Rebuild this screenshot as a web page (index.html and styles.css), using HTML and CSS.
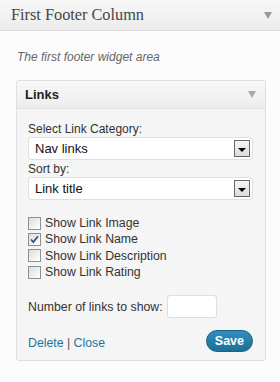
FILE: index.html
```html
<!DOCTYPE html>
<html lang="en">
<head>
  <meta charset="UTF-8">
  <title>Widgets</title>
  <link rel="stylesheet" href="styles.css">
</head>
<body>

  <div class="sidebar">
    <div class="sidebar-head">
      <h3>First Footer Column</h3>
      <span class="arrow"></span>
    </div>

    <div class="sidebar-body">
      <p class="desc">The first footer widget area</p>

      <div class="widget">
        <div class="widget-head">
          <h4>Links</h4>
          <span class="arrow small"></span>
        </div>

        <div class="widget-inside">
          <label class="field-label">Select Link Category:</label>
          <div class="select">
            <span>Nav links</span>
            <span class="select-btn"></span>
          </div>

          <label class="field-label">Sort by:</label>
          <div class="select">
            <span>Link title</span>
            <span class="select-btn"></span>
          </div>

          <ul class="checks">
            <li><span class="box"></span>Show Link Image</li>
            <li>
              <span class="box">
                <svg width="9" height="9" viewBox="0 0 9 9"><path d="M1 4.5 L3.3 7 L8 1.2" fill="none" stroke="#3b4f8c" stroke-width="1.8"/></svg>
              </span>Show Link Name
            </li>
            <li><span class="box"></span>Show Link Description</li>
            <li><span class="box"></span>Show Link Rating</li>
          </ul>

          <div class="number-row">
            <label>Number of links to show:</label>
            <span class="num-input"></span>
          </div>

          <div class="actions">
            <div class="links"><a href="#">Delete</a> <span class="sep">|</span> <a href="#">Close</a></div>
            <button class="save">Save</button>
          </div>
        </div>
      </div>
    </div>
  </div>

</body>
</html>
```

FILE: styles.css
```css
body {
  margin: 0;
  background-color: #fcfcfc;
  font-family: "Liberation Sans", Arial, sans-serif;
  font-size: 12px;
  color: #333;
}

.sidebar-head {
  height: 30px;
  display: flex;
  align-items: center;
  justify-content: space-between;
  padding: 0 8px 0 11px;
  background: linear-gradient(#f7f7f7, #ececec);
  border-bottom: 1px solid #dcdcdc;
}

.sidebar-head h3 {
  margin: 0;
  font-family: "Liberation Serif", "Times New Roman", serif;
  font-weight: normal;
  font-size: 16.3px;
  color: #464646;
}

.arrow {
  width: 0;
  height: 0;
  border-left: 4px solid transparent;
  border-right: 4px solid transparent;
  border-top: 7px solid #999;
}

.arrow.small {
  border-top-color: #aaa;
}

.sidebar-body {
  padding: 0 14px 0 16px;
}

.desc {
  margin: 0;
  padding: 19px 0 15px 1px;
  line-height: 15px;
  font-style: italic;
  color: #666;
}

.widget {
  border: 1px solid #dfdfdf;
  border-radius: 3px;
  background-color: #f5f5f5;
}

.widget-head {
  height: 27px;
  display: flex;
  align-items: center;
  justify-content: space-between;
  padding: 0 9px 0 8px;
  background: linear-gradient(#f8f8f8, #ededed);
  border-bottom: 1px solid #dfdfdf;
  border-radius: 3px 3px 0 0;
}

.widget-head h4 {
  margin: 0;
  font-size: 13px;
  color: #222;
}

.widget-inside {
  padding: 13px 12px 8px 11px;
}

.field-label {
  display: block;
  line-height: 15px;
}

.select {
  height: 21px;
  margin-bottom: 2px;
  display: flex;
  align-items: center;
  justify-content: space-between;
  padding: 0 2px 0 6px;
  background-color: #fff;
  border: 1px solid #dfdfdf;
  border-radius: 3px;
  font-size: 13px;
  color: #111;
}

.select-btn {
  width: 14px;
  height: 15px;
  border: 1px solid #666;
  background: linear-gradient(#f4f4f4, #dcdcdc);
  display: flex;
  align-items: center;
  justify-content: center;
}

.select-btn::after {
  content: "";
  border-left: 4px solid transparent;
  border-right: 4px solid transparent;
  border-top: 4px solid #000;
  margin-top: 2px;
}

.checks {
  list-style: none;
  margin: 15px 0 0;
  padding: 0;
}

.checks li {
  display: flex;
  align-items: center;
  height: 16.3px;
  font-size: 12.3px;
}

.box {
  width: 11px;
  height: 11px;
  margin-right: 4px;
  border: 1px solid #8e8f8f;
  background: linear-gradient(135deg, #dcdcdc, #fff);
  display: flex;
  align-items: center;
  justify-content: center;
}

.number-row {
  margin-top: 15px;
  display: flex;
  align-items: center;
  gap: 4px;
  font-size: 12.3px;
}

.num-input {
  width: 48px;
  height: 21px;
  background-color: #fff;
  border: 1px solid #dfdfdf;
  border-radius: 3px;
}

.actions {
  margin-top: 12px;
  display: flex;
  align-items: center;
  justify-content: space-between;
}

.links {
  font-size: 12.3px;
  padding-top: 3px;
  color: #333;
}

.links a {
  color: #21759b;
  text-decoration: none;
}

.sep {
  color: #555;
}

.save {
  height: 22px;
  padding: 0 8px;
  border: 1px solid #1b6286;
  border-radius: 11px;
  background: linear-gradient(#2e8fbf, #1f6f96);
  color: #fff;
  font-family: "Liberation Sans", Arial, sans-serif;
  font-weight: bold;
  font-size: 12.5px;
}
```
